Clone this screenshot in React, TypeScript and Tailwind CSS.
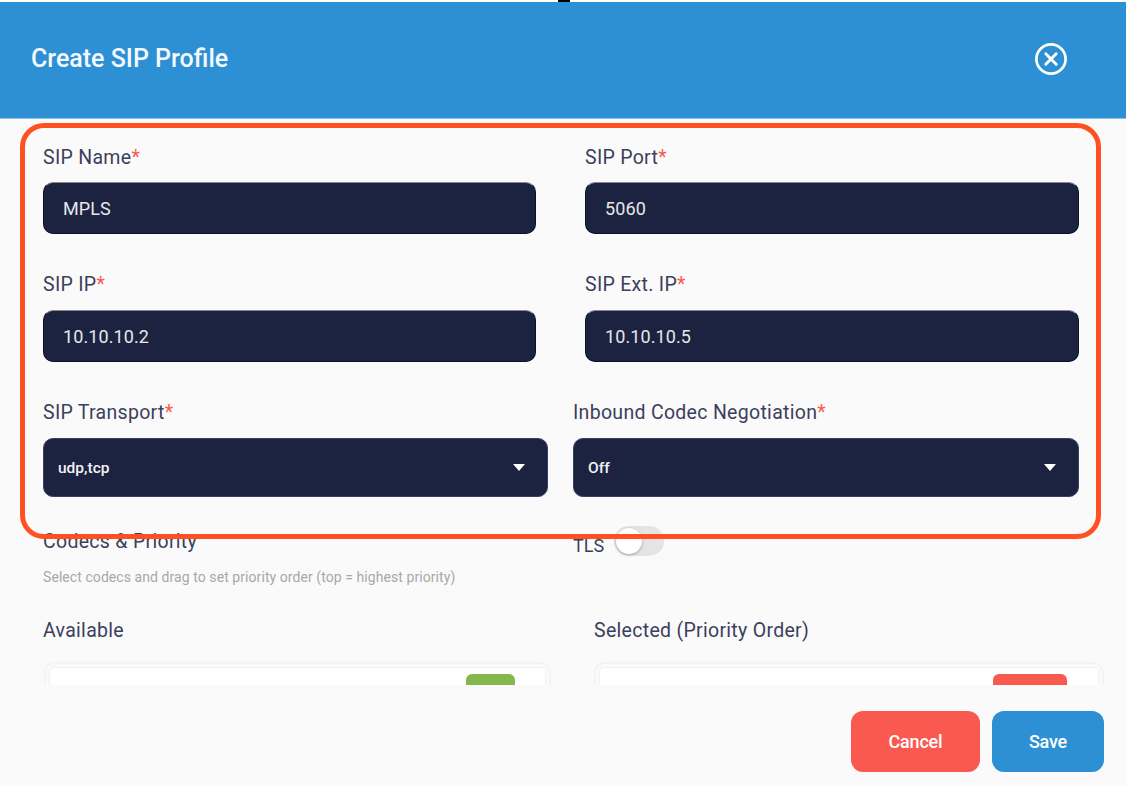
import React from "react";

const font = "font-['Roboto','Liberation_Sans',sans-serif]";
const labelText = "h-[21px] text-[19.5px] leading-[21px] tracking-[0.3px] text-[#3a3f5c]";

function Req({ text }: { text: string }) {
  return (
    <label className={`block ${labelText}`}>
      {text}
      <span className="text-[#f9594f]">*</span>
    </label>
  );
}

function TextBox({ value }: { value: string }) {
  return (
    <div className="flex h-[52px] items-center rounded-[10px] border border-[#0d1020] border-t-[#8a8a8a] bg-[#1c2340] pl-[19px] text-[18px] tracking-[0.1px] text-[#e6e7ec]">
      {value}
    </div>
  );
}

function SelectBox({ value }: { value: string }) {
  return (
    <div className="flex h-[59px] items-center justify-between rounded-[10px] border border-[#3a4060] bg-[#1c2340] pl-[14px] pr-[22px] text-[15.5px] font-medium text-[#f1f2f5]">
      <span className="translate-y-[1px]">{value}</span>
      <span className="h-0 w-0 border-x-[6.5px] border-t-[7px] border-x-transparent border-t-white" />
    </div>
  );
}

function CloseIcon() {
  return (
    <svg width="32" height="32" viewBox="0 0 32 32" fill="none" stroke="white" strokeLinecap="round">
      <circle cx="16" cy="16" r="14.6" strokeWidth="2.7" />
      <path d="M10.8 10.8 21.2 21.2M21.2 10.8 10.8 21.2" strokeWidth="2.9" />
    </svg>
  );
}

export default function App() {
  return (
    <div className={`${font} relative h-[786px] w-[1126px] overflow-hidden bg-[#fafafa]`}>
      <div className="h-[2px] bg-white pl-[558px]">
        <div className="h-[2px] w-[12px] bg-black" />
      </div>

      <header className="flex h-[117px] items-center justify-between border-b border-[#8cc3e8] bg-[#2d90d4] pb-[2px] pl-[31px] pr-[59px]">
        <h1 className="text-[25px] font-medium text-[#f4f9fd]">Create SIP Profile</h1>
        <CloseIcon />
      </header>

      <div className="h-[566px] overflow-hidden pl-[43px] pr-[22px]">
        <div className="flex pt-[28px]">
          <div className="w-[493px]">
            <Req text="SIP Name" />
            <div className="mt-[14px]"><TextBox value="MPLS" /></div>
          </div>
          <div className="ml-[49px] w-[494px]">
            <Req text="SIP Port" />
            <div className="mt-[14px]"><TextBox value="5060" /></div>
          </div>
        </div>

        <div className="flex pt-[40px]">
          <div className="w-[493px]">
            <Req text="SIP IP" />
            <div className="mt-[15px]"><TextBox value="10.10.10.2" /></div>
          </div>
          <div className="ml-[49px] w-[494px]">
            <Req text="SIP Ext. IP" />
            <div className="mt-[15px]"><TextBox value="10.10.10.5" /></div>
          </div>
        </div>

        <div className="flex pt-[40px]">
          <div className="w-[505px]">
            <Req text="SIP Transport" />
            <div className="mt-[15px]"><SelectBox value="udp,tcp" /></div>
          </div>
          <div className="ml-[25px] w-[506px]">
            <Req text="Inbound Codec Negotiation" />
            <div className="mt-[15px]"><SelectBox value="Off" /></div>
          </div>
        </div>

        <div className="flex pt-[29px]">
          <div className="w-[530px]">
            <div className={`mt-[5px] ${labelText}`}>Codecs &amp; Priority</div>
            <p className="mt-[18px] text-[14px] leading-[15px] tracking-[0.07px] text-[#a8a8a8]">
              Select codecs and drag to set priority order (top = highest priority)
            </p>
          </div>
          <div className="flex h-[30px] items-start">
            <span className="mt-[9px] text-[18px] leading-[21px] text-[#3a3f5c]">TLS</span>
            <div className="ml-[10px] flex h-[30px] w-[50px] items-center rounded-full bg-[#e4e4e4] pl-[2px]">
              <div className="h-[26px] w-[26px] rounded-full bg-white shadow-[0_1px_3px_rgba(0,0,0,0.3)]" />
            </div>
          </div>
        </div>

        <div className="flex pt-[35px]">
          <div className="w-[551px]">
            <div className={labelText}>Available</div>
            <div className="ml-[1px] mt-[21px] h-[60px] w-[507px] rounded-[10px] border-2 border-[#eef6fd] p-[4px]">
              <div className="flex h-full justify-end rounded-[4px] bg-white pr-[30px] pt-[6px] shadow-[0_0_2px_rgba(0,0,0,0.12)]">
                <div className="h-[40px] w-[49px] rounded-[6px] bg-[#84b84c]" />
              </div>
            </div>
          </div>
          <div className="w-[510px]">
            <div className={labelText}>Selected (Priority Order)</div>
            <div className="mt-[21px] h-[60px] w-[510px] rounded-[10px] border-2 border-[#eef6fd] p-[4px]">
              <div className="flex h-full justify-end rounded-[4px] bg-white pr-[31px] pt-[6px] shadow-[0_0_2px_rgba(0,0,0,0.12)]">
                <div className="h-[40px] w-[74px] rounded-[6px] bg-[#f9594f]" />
              </div>
            </div>
          </div>
        </div>
      </div>

      <footer className="flex justify-end gap-[12px] pr-[22px] pt-[26px]">
        <button type="button" className="h-[61px] w-[129px] rounded-[12px] bg-[#f9594f] text-[18px] font-medium tracking-[-0.2px] text-white">
          Cancel
        </button>
        <button type="button" className="h-[61px] w-[112px] rounded-[12px] bg-[#2d90d4] text-[18px] font-medium tracking-[-0.2px] text-white">
          Save
        </button>
      </footer>

      {/* annotation drawn over the form */}
      <div className="pointer-events-none absolute left-[20px] top-[123px] h-[416px] w-[1081px] rounded-[24px] border-[5px] border-[#ff5022]" />
    </div>
  );
}
